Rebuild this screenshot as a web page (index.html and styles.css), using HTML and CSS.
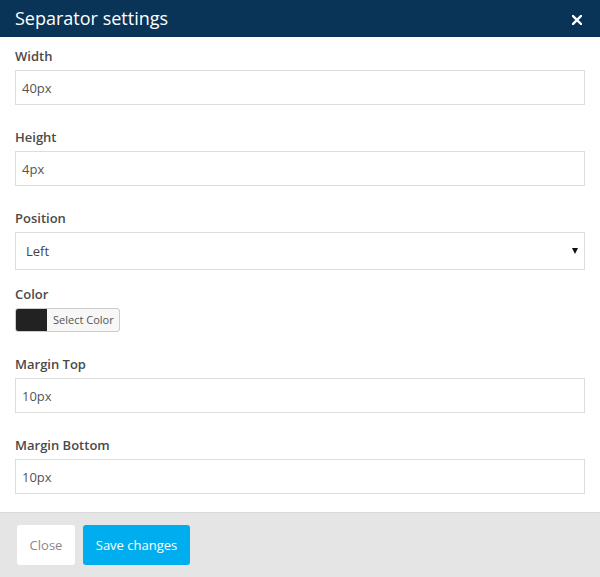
FILE: index.html
```html
<!DOCTYPE html>
<html>
<head>
<meta charset="utf-8">
<link rel="stylesheet" href="styles.css">
</head>
<body>
<div class="modal">
  <div class="modal-header">
    <h4 class="modal-title">Separator settings</h4>
    <button class="close" type="button" aria-label="Close">
      <svg width="10" height="10" viewBox="0 0 10 10"><path d="M1 1L9 9M9 1L1 9" stroke="#fff" stroke-width="2.4" stroke-linecap="square"/></svg>
    </button>
  </div>
  <div class="modal-body">
    <div class="form-group">
      <label class="label">Width</label>
      <input class="input" type="text" value="40px">
    </div>
    <div class="form-group">
      <label class="label">Height</label>
      <input class="input" type="text" value="4px">
    </div>
    <div class="form-group form-group-select">
      <label class="label">Position</label>
      <div class="select-wrap">
        <select class="select"><option>Left</option><option>Center</option><option>Right</option></select>
      </div>
    </div>
    <div class="form-group">
      <label class="label">Color</label>
      <div class="color-btn"><span class="swatch"></span><span class="color-text">Select Color</span></div>
    </div>
    <div class="form-group">
      <label class="label">Margin Top</label>
      <input class="input" type="text" value="10px">
    </div>
    <div class="form-group last">
      <label class="label">Margin Bottom</label>
      <input class="input" type="text" value="10px">
    </div>
  </div>
  <div class="modal-footer">
    <button class="btn btn-default" type="button">Close</button>
    <button class="btn btn-primary" type="button">Save changes</button>
  </div>
</div>
</body>
</html>
```
FILE: styles.css
```css
* { box-sizing: border-box; }
html, body { margin: 0; padding: 0; background: #fff; }
body { font-family: "Open Sans", "Liberation Sans", sans-serif; }
.modal { width: 600px; height: 577px; display: flex; flex-direction: column; }
.modal-header {
  height: 37px; background: #0a3358; display: flex; align-items: center;
  justify-content: space-between; padding: 0 18px 0 15px;
}
.modal-title { margin: 0; font-size: 18px; font-weight: 400; color: #fff; line-height: 37px; }
.close { background: none; border: 0; padding: 0; margin-top: 2px; display: flex; cursor: pointer; }
.modal-body { padding: 9px 15px 18px 15px; flex: 1; }
.form-group { margin-bottom: 22px; display: flex; flex-direction: column; }
.form-group-select { margin-bottom: 14px; }
.form-group.last { margin-bottom: 0; }
.label { font-size: 13px; font-weight: 600; color: #4a4a4a; line-height: 20px; margin-bottom: 4px; }
.input {
  width: 570px; height: 35px; border: 1px solid #ddd; border-radius: 0; padding: 0 6px;
  font-family: inherit; font-size: 13px; color: #555; background: #fff; outline: none;
}
.select-wrap { position: relative; width: 570px; }
.select {
  width: 570px; height: 38px; border: 1px solid #ddd; background: #fff; padding: 0 10px;
  font-family: inherit; font-size: 13px; color: #444; appearance: none; -webkit-appearance: none;
  border-radius: 0; outline: none;
}
.select-wrap::after {
  content: ""; position: absolute; right: 7px; top: 16px;
  border-left: 3.5px solid transparent; border-right: 3.5px solid transparent; border-top: 6px solid #111;
}
.color-btn {
  display: flex; width: 105px; height: 24px; border: 1px solid #ccc; border-radius: 3px; overflow: hidden;
  background: #f7f7f7;
}
.swatch { width: 31px; background: #222; }
.color-text { font-size: 11px; color: #555; line-height: 22px; padding-left: 6px; }
.modal-footer {
  border-top: 1px solid #d9d9d9; background: #e5e5e5; height: 65px;
  padding: 12px 17px; display: flex; gap: 8px;
}
.btn {
  height: 40px; border: 0; border-radius: 3px; font-family: inherit; font-size: 13px;
  padding: 0; cursor: pointer; white-space: nowrap; text-align: center;
}
.btn-default { background: #fff; color: #888; width: 58px; }
.btn-primary { background: #00aeef; color: #fff; width: 107px; }
```
